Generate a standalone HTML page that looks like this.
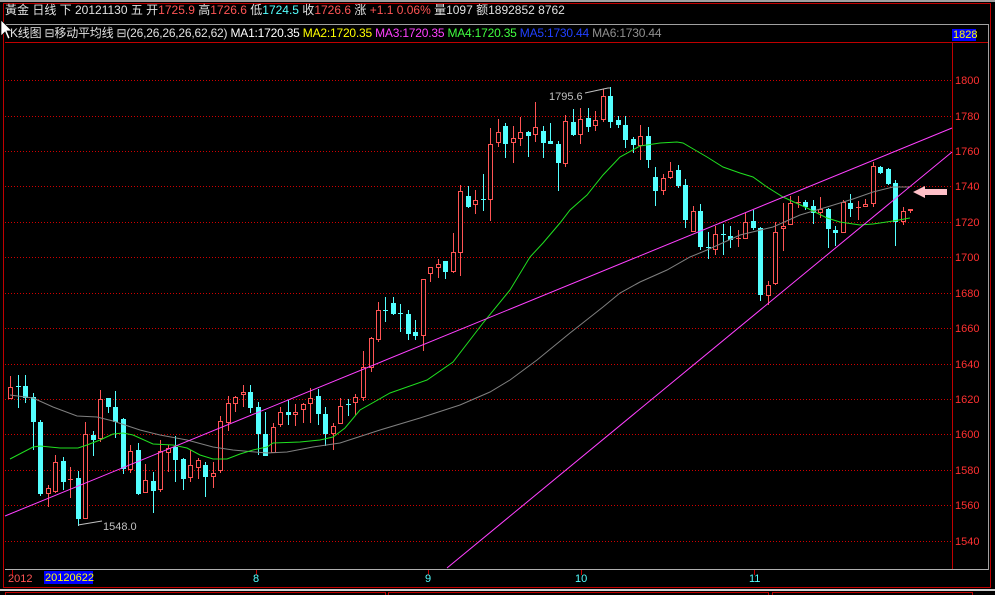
<!DOCTYPE html>
<html><head><meta charset="utf-8">
<style>
html,body{margin:0;padding:0;background:#000;width:995px;height:595px;overflow:hidden}
body{position:relative;font-family:"Liberation Sans","Noto Sans CJK SC",sans-serif}
.t{position:absolute;white-space:pre;font-size:12px;line-height:14px}
</style></head><body>
<svg width="995" height="595" style="position:absolute;left:0;top:0" xmlns="http://www.w3.org/2000/svg" id="s">
<rect x="0" y="0" width="995" height="2" fill="#a0a0a0"/>
<line x1="3.5" y1="3" x2="3.5" y2="588" stroke="#c00000"/>
<line x1="990.5" y1="3" x2="990.5" y2="588" stroke="#c00000"/>
<line x1="3" y1="3.5" x2="991" y2="3.5" stroke="#c00000"/>
<line x1="5" y1="24.5" x2="988" y2="24.5" stroke="#a0a0a0"/>
<line x1="988.5" y1="24" x2="988.5" y2="570" stroke="#a0a0a0"/>
<line x1="5" y1="42.5" x2="988" y2="42.5" stroke="#c00000"/>
<line x1="952.5" y1="43" x2="952.5" y2="569" stroke="#c00000"/>
<line x1="5" y1="569.5" x2="988" y2="569.5" stroke="#b0b0b0"/>
<line x1="3" y1="587.5" x2="991" y2="587.5" stroke="#c00000"/>
<rect x="0" y="589" width="995" height="2" fill="#d0d0d0"/>
<g stroke="#c00000" fill="none">
<rect x="5.5" y="592.5" width="380" height="4"/><rect x="388.5" y="592.5" width="380" height="4"/><rect x="772.5" y="592.5" width="200" height="4"/>
</g>
<g stroke="#c00000"><line x1="12.5" y1="570" x2="12.5" y2="575"/><line x1="256.5" y1="570" x2="256.5" y2="575"/><line x1="428.5" y1="570" x2="428.5" y2="575"/><line x1="581.5" y1="570" x2="581.5" y2="575"/><line x1="754.5" y1="570" x2="754.5" y2="575"/></g>
<g id="grid" stroke="#d00000" stroke-dasharray="1,2"></g>
<g id="cd"></g>
<polyline fill="none" stroke="#808080" points="10,395 33,398 53,407 77,416 97,417 113,421 140,430 160,435 187,440 213,447 233,450 267,453 287,452 313,447 340,443 380,430 420,418 460,405 490,392 510,380 537,360 570,333 603,307 620,293 640,282 667,270 690,257 707,250 740,235 773,227 800,215 827,207 853,199 873,192 893,187 910,187"/>
<polyline fill="none" stroke="#20e020" points="10,459 33,447 40,446 60,448 78,448 87,445 100,440 113,434 123,433 133,435 153,444 173,445 187,448 200,455 213,459 227,459 240,454 253,450 267,447 273,443 300,442 320,440 333,437 345,428 360,410 390,393 427,380 453,362 483,323 510,290 530,257 543,243 560,223 570,210 587,195 603,175 620,157 640,146 660,143 677,142 683,143 707,157 723,167 740,173 753,177 767,187 783,197 807,208 827,218 840,222 860,225 873,224 893,221 910,218"/>
<line x1="5" y1="516" x2="952" y2="128" stroke="#ff40ff"/>
<line x1="447" y1="568" x2="952" y2="152" stroke="#ff40ff"/>
<polyline fill="none" stroke="#c0c0c0" points="78,525 102,521"/>
<polyline fill="none" stroke="#c0c0c0" points="585,93 608,88 610,88"/>
<path d="M913,192 L925,186 L925,189 L947,189 L947,195 L925,195 L925,198 Z" fill="#ffc0c8"/>
<rect x="952" y="29" width="24" height="12" fill="#0000ff"/>
<rect x="44" y="571" width="49" height="13" fill="#0000ff"/>
<path d="M1,20 L1,36 L5,32 L8,39 L10,38 L7,31 L12,31 Z" fill="#fff" stroke="#000" stroke-width="0.7"/>
</svg>
<div class="t" style="left:5px;top:3px;color:#e0e0e0">黃金 日线 下 20121130 五 开<span style="color:#ff5454">1725.9</span> 高<span style="color:#ff5454">1726.6</span> 低<span style="color:#54ffff">1724.5</span> 收<span style="color:#ff5454">1726.6</span> 涨 <span style="color:#ff5454">+1.1 0.06%</span> 量1097 额1892852 8762</div>
<div class="t" style="left:10px;top:26px;color:#e0e0e0;letter-spacing:-0.2px">K线图 ⊟移动平均线 ⊟(26,26,26,26,62,62) <span style="color:#fff">MA1:1720.35</span> <span style="color:#ffff00">MA2:1720.35</span> <span style="color:#ff40ff">MA3:1720.35</span> <span style="color:#40ff40">MA4:1720.35</span> <span style="color:#2040ff">MA5:1730.44</span> <span style="color:#909090">MA6:1730.44</span></div>
<div class="t" style="left:953px;top:28px;color:#ffff00;font-size:11px">1828</div>
<div class="t" style="left:103px;top:520px;color:#c0c0c0;font-size:11px">1548.0</div>
<div class="t" style="left:549px;top:90px;color:#c0c0c0;font-size:11px">1795.6</div>
<div class="t" style="left:8px;top:572px;color:#ff5454;font-size:11px">2012</div>
<div class="t" style="left:45px;top:571px;color:#ffff00;font-size:11px">20120622</div>
<div class="t" style="left:253px;top:572px;color:#54ffff;font-size:11px">8</div>
<div class="t" style="left:425px;top:572px;color:#54ffff;font-size:11px">9</div>
<div class="t" style="left:575px;top:572px;color:#54ffff;font-size:11px">10</div>
<div class="t" style="left:749px;top:572px;color:#54ffff;font-size:11px">11</div>
<div id="pl"></div>
<script>
var ns="http://www.w3.org/2000/svg";
var g=document.getElementById('grid'),pl=document.getElementById('pl');
for(var p=1540;p<=1800;p+=20){var y=Math.round(151+(1760-p)*1.771)+0.5;
var l=document.createElementNS(ns,'line');l.setAttribute('x1',5);l.setAttribute('x2',952);l.setAttribute('y1',y);l.setAttribute('y2',y);g.appendChild(l);
var d=document.createElement('div');d.className='t';d.style.cssText='left:955px;top:'+(y-7)+'px;color:#ff3030;font-size:11px';d.textContent=p;pl.appendChild(d);}
var C=[[10,376,387,398,398,'r'],[18,375,386,386,408,'c'],[25,375,386,397,403,'c'],[33,393,397,421,450,'c'],[40,420,422,493,496,'c'],[48,485,488,493,507,'r'],[55,455,462,491,493,'r'],[63,457,461,481,490,'c'],[70,467,479,479,498,'r'],[78,471,478,518,526,'c'],[85,422,434,518,519,'r'],[93,431,435,439,456,'c'],[100,390,399,438,442,'r'],[108,398,398,406,413,'c'],[115,391,407,421,438,'c'],[123,418,419,468,474,'c'],[130,445,451,469,473,'r'],[138,443,450,493,495,'c'],[145,464,480,492,493,'r'],[153,472,481,490,513,'c'],[160,440,451,489,492,'r'],[168,445,448,452,472,'r'],[175,436,447,459,482,'c'],[183,458,459,478,490,'c'],[190,450,465,477,482,'r'],[198,458,460,467,479,'r'],[205,462,465,476,497,'c'],[213,462,473,476,488,'r'],[220,416,421,470,473,'r'],[228,396,403,422,431,'r'],[235,396,397,403,412,'r'],[243,385,392,394,407,'r'],[250,385,392,407,413,'c'],[258,402,407,433,455,'c'],[265,412,434,455,455,'c'],[273,423,427,452,453,'r'],[280,407,412,424,427,'r'],[288,400,412,414,425,'c'],[295,404,412,414,426,'r'],[303,403,404,409,423,'r'],[310,388,398,403,423,'r'],[318,389,396,413,425,'c'],[325,407,414,433,446,'c'],[333,423,426,433,450,'r'],[340,398,406,423,423,'r'],[348,399,404,404,416,'c'],[355,394,397,402,415,'r'],[363,351,367,397,401,'r'],[371,337,338,367,372,'r'],[378,302,310,339,342,'r'],[385,297,310,310,322,'c'],[393,297,303,313,315,'c'],[400,304,313,313,332,'c'],[408,310,314,333,340,'c'],[415,320,332,335,340,'c'],[423,279,279,335,351,'r'],[430,267,267,273,282,'r'],[438,259,264,267,278,'r'],[445,261,261,271,279,'c'],[453,233,252,271,273,'r'],[460,185,191,252,276,'r'],[468,186,196,206,208,'c'],[475,190,200,204,214,'r'],[483,174,199,199,211,'c'],[490,128,144,199,221,'r'],[498,119,132,142,147,'r'],[505,123,126,143,158,'c'],[513,126,138,142,163,'r'],[520,117,132,138,146,'r'],[528,131,132,135,157,'c'],[535,102,127,134,142,'r'],[543,126,131,142,158,'c'],[550,123,141,143,144,'c'],[558,141,144,162,191,'c'],[565,115,121,163,167,'r'],[573,109,122,134,136,'c'],[580,108,119,134,144,'r'],[588,108,118,126,132,'c'],[595,111,120,125,131,'r'],[603,89,96,119,122,'r'],[610,87,96,121,128,'c'],[618,116,120,124,128,'c'],[625,116,125,139,148,'c'],[633,137,139,144,153,'c'],[640,125,136,145,160,'r'],[648,127,136,159,168,'c'],[655,167,177,190,206,'c'],[663,174,178,190,195,'r'],[670,162,171,177,179,'r'],[678,165,170,185,188,'c'],[685,179,185,219,228,'c'],[693,206,211,231,232,'r'],[700,204,211,246,250,'c'],[708,232,247,247,259,'c'],[715,226,234,249,255,'r'],[723,224,234,234,255,'c'],[730,226,236,239,248,'c'],[738,230,238,238,247,'r'],[745,213,222,238,239,'r'],[753,210,221,227,230,'c'],[760,227,228,294,301,'c'],[768,281,285,295,305,'r'],[775,222,232,283,285,'r'],[783,203,226,228,251,'r'],[790,196,203,224,224,'r'],[798,196,202,202,208,'r'],[805,200,202,206,210,'c'],[813,200,206,212,224,'c'],[820,197,209,212,218,'r'],[828,208,209,228,248,'c'],[835,226,230,232,246,'c'],[843,200,202,232,233,'r'],[850,194,203,208,217,'c'],[858,201,207,207,220,'r'],[865,199,204,206,206,'r'],[873,162,166,203,207,'r'],[880,166,167,172,174,'c'],[888,168,169,183,185,'c'],[895,180,183,221,246,'c'],[903,207,211,221,225,'r'],[910,209,209,210,213,'r']];
var cd=document.getElementById('cd'),h='';
C.forEach(function(c){var x=c[0],col=c[5]=='r'?'#ff5454':'#54ffff';
h+='<line x1="'+(x+.5)+'" y1="'+c[1]+'" x2="'+(x+.5)+'" y2="'+c[4]+'" stroke="'+col+'"/>';
var bh=c[3]-c[2];
if(bh<1){h+='<line x1="'+(x-2)+'" y1="'+(c[2]+.5)+'" x2="'+(x+3)+'" y2="'+(c[2]+.5)+'" stroke="'+col+'"/>';}
else if(c[5]=='r'){h+='<rect x="'+(x-1.5)+'" y="'+(c[2]+.5)+'" width="4" height="'+bh+'" fill="#000" stroke="'+col+'"/>';}
else{h+='<rect x="'+(x-2)+'" y="'+c[2]+'" width="5" height="'+(bh+1)+'" fill="'+col+'"/>';}
});
cd.innerHTML=h;
</script>
</body></html>
